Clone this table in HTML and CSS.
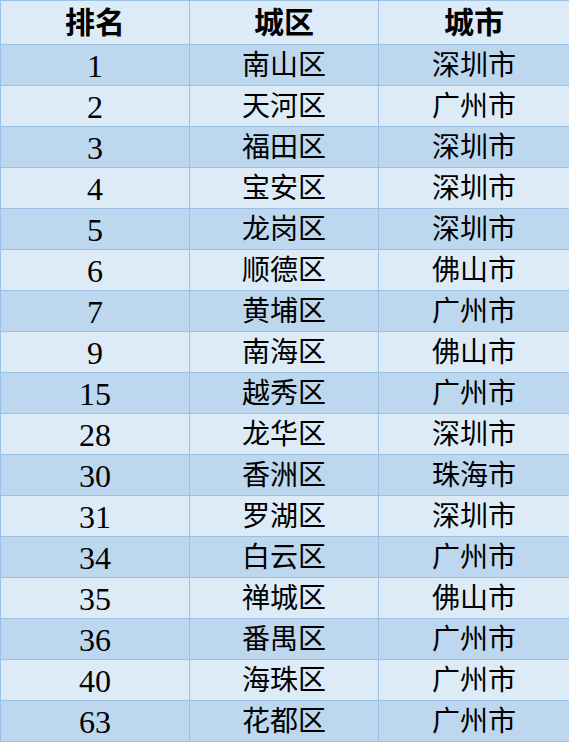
FILE: index.html
```html
<!DOCTYPE html>
<html lang="zh">
<head>
<meta charset="utf-8">
<link rel="stylesheet" href="styles.css">
</head>
<body>
<table class="rank">
<colgroup><col class="c1"><col class="c2"><col class="c3"></colgroup>
<thead>
<tr><th>排名</th><th>城区</th><th>城市</th></tr>
</thead>
<tbody>
<tr class="odd"><td class="num">1</td><td>南山区</td><td>深圳市</td></tr>
<tr><td class="num">2</td><td>天河区</td><td>广州市</td></tr>
<tr class="odd"><td class="num">3</td><td>福田区</td><td>深圳市</td></tr>
<tr><td class="num">4</td><td>宝安区</td><td>深圳市</td></tr>
<tr class="odd"><td class="num">5</td><td>龙岗区</td><td>深圳市</td></tr>
<tr><td class="num">6</td><td>顺德区</td><td>佛山市</td></tr>
<tr class="odd"><td class="num">7</td><td>黄埔区</td><td>广州市</td></tr>
<tr><td class="num">9</td><td>南海区</td><td>佛山市</td></tr>
<tr class="odd"><td class="num">15</td><td>越秀区</td><td>广州市</td></tr>
<tr><td class="num">28</td><td>龙华区</td><td>深圳市</td></tr>
<tr class="odd"><td class="num">30</td><td>香洲区</td><td>珠海市</td></tr>
<tr><td class="num">31</td><td>罗湖区</td><td>深圳市</td></tr>
<tr class="odd"><td class="num">34</td><td>白云区</td><td>广州市</td></tr>
<tr><td class="num">35</td><td>禅城区</td><td>佛山市</td></tr>
<tr class="odd"><td class="num">36</td><td>番禺区</td><td>广州市</td></tr>
<tr><td class="num">40</td><td>海珠区</td><td>广州市</td></tr>
<tr class="odd"><td class="num">63</td><td>花都区</td><td>广州市</td></tr>
</tbody>
</table>
</body>
</html>
```
FILE: styles.css
```css
html, body {
  margin: 0;
  padding: 0;
  background: #ffffff;
}
.rank {
  border-collapse: collapse;
  table-layout: fixed;
  width: 569px;
  font-family: "Liberation Serif", "Noto Sans CJK SC", serif;
  color: #000;
}
.rank col.c1, .rank col.c2 {
  width: 189px;
}
.rank col.c3 {
  width: 191px;
}
.rank th, .rank td {
  border: 1px solid #9bc2e6;
  padding: 0;
  text-align: center;
  background: #ddebf7;
  overflow: hidden;
}
.rank th {
  font-size: 30px;
  font-weight: bold;
  line-height: 43px;
  height: 43px;
}
.rank td {
  font-size: 28px;
  line-height: 38px;
  height: 38px;
  padding-top: 2px;
}
.rank td.num {
  font-size: 32px;
}
.rank tr.odd td {
  background: #bdd7ee;
}
```
